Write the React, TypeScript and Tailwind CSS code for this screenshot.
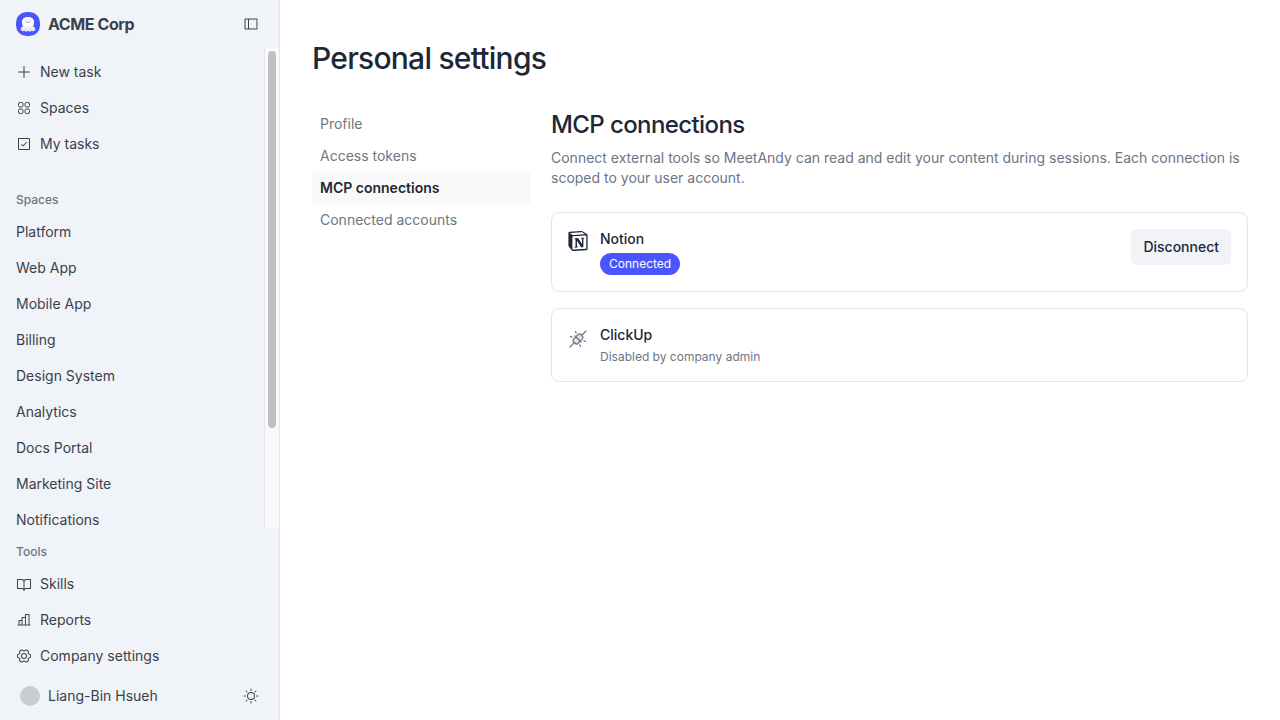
import type { ReactNode } from "react";
import {
  PiBookOpen,
  PiChartBar,
  PiCheckSquare,
  PiGearSix,
  PiPlugsConnectedDuotone,
  PiPlus,
  PiSidebarSimple,
  PiSun,
} from "react-icons/pi";
import { SiNotion } from "react-icons/si";

const spaces = [
  "Platform",
  "Web App",
  "Mobile App",
  "Billing",
  "Design System",
  "Analytics",
  "Docs Portal",
  "Marketing Site",
  "Notifications",
];

const settingsTabs = ["Profile", "Access tokens", "MCP connections", "Connected accounts"];

function Logo() {
  return (
    <svg viewBox="0 0 24 24" className="size-6" aria-hidden="true">
      <rect width="24" height="24" rx="10.5" fill="#4b55fd" />
      <g fill="#e6e8ee">
        <circle cx="7" cy="17" r="2.300" />
        <circle cx="17" cy="17" r="2.300" />
        <circle cx="10.200" cy="17.600" r="2.100" />
        <circle cx="13.800" cy="17.600" r="2.100" />
      </g>
      <path d="M12 5c-3.600 0-6 1.800-6 5 0 2.300.9 3.700.7 5.300C8 16.600 10 17 12 17s4-.4 5.300-1.700C17.100 13.700 18 12.300 18 10c0-3.200-2.400-5-6-5z" fill="#fbfbfc" />
      <path d="M7.200 14.200c1.100 1.300 2.800 1.800 4.800 1.800s3.700-.5 4.800-1.800" fill="none" stroke="#d3d6de" strokeWidth=".8" />
      <path d="M9.800 9.600c1.200 1.300 3.200 1.300 4.400 0" fill="none" stroke="#8a91dc" strokeWidth=".9" strokeLinecap="round" />
    </svg>
  );
}

function SpacesIcon() {
  return (
    <svg viewBox="0 0 16 16" className="size-4" fill="none" stroke="currentColor" strokeWidth="1" aria-hidden="true">
      <rect x="2.500" y="2.500" width="4.500" height="4.500" rx="1.500" />
      <rect x="9" y="2.500" width="4.500" height="4.500" rx="1.500" />
      <rect x="2.500" y="9" width="4.500" height="4.500" rx="1.500" />
      <rect x="9" y="9" width="4.500" height="4.500" rx="1.500" />
    </svg>
  );
}

function NavItem({ icon, children }: { icon?: ReactNode; children: ReactNode }) {
  return (
    <a href="#" className="flex h-9 shrink-0 items-center gap-2 px-4 text-sm">
      {icon}
      {children}
    </a>
  );
}

function Sidebar() {
  return (
    <aside className="flex w-70 shrink-0 flex-col border-r border-[#e2e4ee] bg-[#f0f4f9] text-[#3c404a]">
      <div className="flex h-12 shrink-0 items-center gap-2 pr-5 pl-4">
        <Logo />
        <span className="flex-1 text-base font-bold tracking-tight">ACME Corp</span>
        <button type="button" aria-label="Toggle sidebar">
          <PiSidebarSimple className="size-4" />
        </button>
      </div>

      <div className="flex min-h-0 flex-1">
        <nav className="flex flex-1 flex-col overflow-hidden pt-1.5">
          <NavItem icon={<PiPlus className="size-4" />}>New task</NavItem>
          <NavItem icon={<SpacesIcon />}>Spaces</NavItem>
          <NavItem icon={<PiCheckSquare className="size-4" />}>My tasks</NavItem>
          <h2 className="mt-6 flex h-7 shrink-0 items-center px-4 text-xs font-medium text-[#6f7480]">Spaces</h2>
          {spaces.map((name) => (
            <NavItem key={name}>{name}</NavItem>
          ))}
        </nav>
        <div className="w-[15px] shrink-0 border-l border-[#e2e4ee] bg-[#fafafa] px-[3px] pt-[3px]" aria-hidden="true">
          <div className="h-[79%] w-2 rounded-full bg-[#c1c1c1]" />
        </div>
      </div>

      <nav className="flex shrink-0 flex-col pt-2.5">
        <h2 className="flex h-7 items-center px-4 text-xs font-medium text-[#6f7480]">Tools</h2>
        <NavItem icon={<PiBookOpen className="size-4" />}>Skills</NavItem>
        <NavItem icon={<PiChartBar className="size-4" />}>Reports</NavItem>
        <NavItem icon={<PiGearSix className="size-4" />}>Company settings</NavItem>
      </nav>
      <div className="mb-0.5 flex h-11 shrink-0 items-center gap-2 px-5 text-sm">
        <span className="size-5 rounded-full bg-[#c9ccd3]" />
        <span className="flex-1">Liang-Bin Hsueh</span>
        <button type="button" aria-label="Switch theme">
          <PiSun className="size-4" />
        </button>
      </div>
    </aside>
  );
}

function ConnectionCard({ icon, name, children, action }: { icon: ReactNode; name: string; children: ReactNode; action?: ReactNode }) {
  return (
    <section className="flex items-start gap-3 rounded-lg border border-[#e3e4ed] p-4">
      {icon}
      <div className="flex flex-1 flex-col items-start gap-1">
        <h3 className="text-sm font-medium">{name}</h3>
        {children}
      </div>
      {action}
    </section>
  );
}

export default function App() {
  return (
    <div className="flex h-screen bg-white font-['Inter',sans-serif] text-[#1d2736]">
      <Sidebar />
      <main className="min-w-0 flex-1 overflow-hidden px-8 pt-10">
        <h1 className="text-3xl font-medium tracking-tight">Personal settings</h1>
        <div className="mt-8 flex gap-5">
          <nav className="flex w-[219px] shrink-0 flex-col text-sm text-[#6d7584]">
            {settingsTabs.map((tab) => (
              <a
                key={tab}
                href="#"
                className={
                  tab === "MCP connections"
                    ? "flex h-8 items-center rounded-sm bg-[#f9f9fa] px-2 font-semibold text-[#1d2736]"
                    : "flex h-8 items-center px-2"
                }
              >
                {tab}
              </a>
            ))}
          </nav>
          <div className="min-w-0 flex-1">
            <h2 className="text-2xl/[34px] font-medium tracking-tight">MCP connections</h2>
            <p className="mt-1.5 text-sm text-[#6d7584]">
              Connect external tools so MeetAndy can read and edit your content during sessions. Each connection is
              scoped to your user account.
            </p>
            <div className="mt-6 flex flex-col gap-4">
              <ConnectionCard
                icon={<SiNotion className="mt-0.5 size-5" />}
                name="Notion"
                action={
                  <button type="button" className="h-9 rounded-md bg-[#f0f4f9] px-3 text-sm font-medium">
                    Disconnect
                  </button>
                }
              >
                <span className="rounded-full bg-[#4b55fd] px-[9px] py-[3px] text-xs text-white">Connected</span>
              </ConnectionCard>
              <ConnectionCard
                icon={<PiPlugsConnectedDuotone className="mt-1 size-5 text-[#6d7584]" />}
                name="ClickUp"
              >
                <p className="text-xs text-[#6d7584]">Disabled by company admin</p>
              </ConnectionCard>
            </div>
          </div>
        </div>
      </main>
    </div>
  );
}
